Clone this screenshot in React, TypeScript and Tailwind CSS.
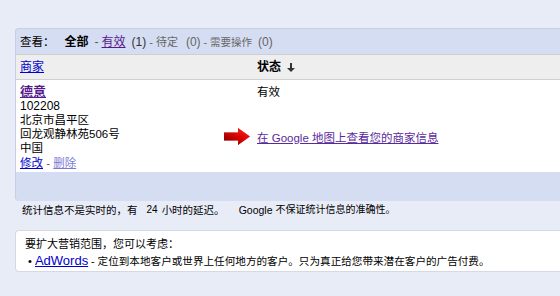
import React from "react";

const F = { fontFamily: '"Liberation Sans", Arial, "Noto Sans CJK SC", sans-serif' };

export default function App() {
  return (
    <div className="w-[560px] h-[296px] bg-[#e8ecf7] overflow-hidden text-[12px] leading-[14px] text-black" style={F}>
      <div className="pt-[28px] pl-[15px]">
        <div className="rounded-l-[4px] bg-[#d5ddf2] border-t border-l border-[#c6cee6] overflow-hidden">
          <div className="h-[25px] flex items-center pl-[4px] whitespace-nowrap">
            <span className="text-[11.5px]">查看：</span>
            <span className="font-bold ml-[10px]">全部</span>
            <span className="ml-[6px] text-[#555]">-</span>
            <a className="ml-[3px] text-[#551a8b] underline">有效</a>
            <span className="ml-[6px] text-[#333]">(1)</span>
            <span className="ml-[3px] text-[#666] text-[11px]">- 待定</span>
            <span className="ml-[8px] text-[#666]">(0)</span>
            <span className="ml-[3px] text-[#666] text-[10.5px]">- 需要操作</span>
            <span className="ml-[6px] text-[#666]">(0)</span>
          </div>
          <div className="h-[26px] flex items-center bg-[#eeeeee] border-t border-b border-[#cfcfcf] pl-[4px]">
            <a className="w-[237px] text-[#0000cc] underline">商家</a>
            <span className="font-bold">状态</span>
            <svg className="ml-[6px]" width="8" height="9" viewBox="0 0 8 9">
              <path d="M3 0h2v5h3L4 9 0 5h3z" fill="#333" />
            </svg>
          </div>
          <div className="bg-white h-[92px] flex pl-[4px] pt-[4px] text-[11.5px]">
            <div className="w-[237px] flex flex-col">
              <a className="text-[#551a8b] underline font-bold text-[13px] leading-[15px]">德意</a>
              <span className="text-[12px]">102208</span>
              <span>北京市昌平区</span>
              <span>回龙观静林苑506号</span>
              <span>中国</span>
              <span className="mt-[1px]">
                <a className="text-[#0000cc] underline">修改</a>
                <span className="text-[#555]"> - </span>
                <a className="text-[#7a7ad6] underline">删除</a>
              </span>
            </div>
            <div className="flex flex-col">
              <span className="mt-[1px]">有效</span>
              <div className="relative mt-[32px]">
                <svg className="absolute left-[-33px] top-[-3px]" width="27" height="17" viewBox="0 0 27 17">
                  <defs>
                    <linearGradient id="ag" x1="0" y1="0" x2="0" y2="1">
                      <stop offset="0" stopColor="#ff3a2a" />
                      <stop offset="0.5" stopColor="#e00000" />
                      <stop offset="1" stopColor="#8a0000" />
                    </linearGradient>
                    <linearGradient id="ah" x1="0" y1="0" x2="1" y2="0">
                      <stop offset="0" stopColor="#6a0000" />
                      <stop offset="0.5" stopColor="#d00000" />
                      <stop offset="1" stopColor="#ff2020" />
                    </linearGradient>
                  </defs>
                  <path d="M0 4.5h14V0l12 8.5-12 8.5v-4.5H0z" fill="url(#ah)" />
                  <path d="M0 4.5h14V0l12 8.5-12 8.5v-4.5H0z" fill="url(#ag)" opacity="0.55" />
                </svg>
                <a className="text-[#5a2a9b] underline">在 Google 地图上查看您的商家信息</a>
              </div>
            </div>
          </div>
          <div className="h-[29px]" />
        </div>
        <div className="h-[16px] flex items-end pl-[7px] whitespace-nowrap text-[10.5px]">
          <span>统计信息不是实时的，有</span>
          <span className="text-[10px] ml-[9px] mr-[4px]">24</span>
          <span>小时的延迟。</span>
          <span className="text-[10.5px] ml-[14px]">Google</span>
          <span className="ml-[3px] text-[10px]">不保证统计信息的准确性。</span>
        </div>
        <div className="mt-[13px] h-[42px] bg-white rounded-l-[4px] border-t border-l border-b border-[#d5d9e6] pl-[9px] pt-[6px] flex flex-col gap-[3px] whitespace-nowrap text-[11px]">
          <span>要扩大营销范围，您可以考虑：</span>
          <span className="pl-[3px]">
            <span>• </span>
            <a className="text-[#0000cc] underline text-[13px]">AdWords</a>
            <span className="text-[10.6px]"> - 定位到本地客户或世界上任何地方的客户。只为真正给您带来潜在客户的广告付费。</span>
          </span>
        </div>
      </div>
    </div>
  );
}
